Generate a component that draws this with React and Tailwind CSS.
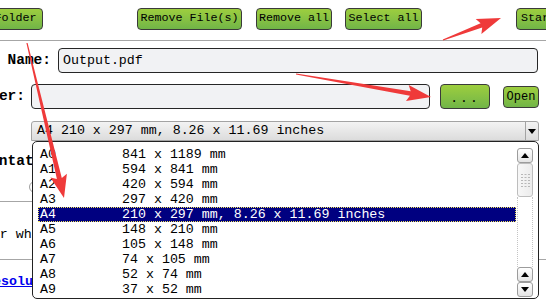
import React from "react";

const sizes = [
  ["A0", "841 x 1189 mm"],
  ["A1", "594 x 841 mm"],
  ["A2", "420 x 594 mm"],
  ["A3", "297 x 420 mm"],
  ["A4", "210 x 297 mm, 8.26 x 11.69 inches"],
  ["A5", "148 x 210 mm"],
  ["A6", "105 x 148 mm"],
  ["A7", "74 x 105 mm"],
  ["A8", "52 x 74 mm"],
  ["A9", "37 x 52 mm"],
];

// tapered arrow polygon from tail to tip
function arrowPoints(x1, y1, x2, y2, headLen, headW, shaftW) {
  const dx = x2 - x1;
  const dy = y2 - y1;
  const len = Math.hypot(dx, dy);
  const ux = dx / len;
  const uy = dy / len;
  const px = -uy;
  const py = ux;
  const bx = x2 - ux * headLen;
  const by = y2 - uy * headLen;
  const barbX = x2 - ux * (headLen + 3);
  const barbY = y2 - uy * (headLen + 3);
  const pts = [
    [x1 + px * 0.6, y1 + py * 0.6],
    [bx + px * (shaftW / 2), by + py * (shaftW / 2)],
    [barbX + px * (headW / 2), barbY + py * (headW / 2)],
    [x2, y2],
    [barbX - px * (headW / 2), barbY - py * (headW / 2)],
    [bx - px * (shaftW / 2), by - py * (shaftW / 2)],
    [x1 - px * 0.6, y1 - py * 0.6],
  ];
  return pts.map((p) => p[0].toFixed(1) + "," + p[1].toFixed(1)).join(" ");
}

const GreenButton = ({ children, className }) => (
  <button
    className={
      "flex shrink-0 items-center justify-center whitespace-nowrap rounded-[4px] border border-[#3a3a3a] bg-linear-to-b from-[#9dce3e] to-[#71b547] text-[11.7px] leading-none text-black " +
      className
    }
  >
    {children}
  </button>
);

const Tri = ({ up }) => (
  <svg width="8" height="5" viewBox="0 0 8 5">
    {up ? <polygon points="0,5 8,5 4,0" fill="#000" /> : <polygon points="0,0 8,0 4,5" fill="#000" />}
  </svg>
);

const ScrollBtn = ({ up }) => (
  <div className="flex h-[15px] w-[16px] items-center justify-center rounded-[3px] border border-[#9c9c9c] bg-linear-to-b from-white to-[#e4e4e4]">
    <Tri up={up} />
  </div>
);

const App = () => {
  return (
    <div className="relative h-[300px] w-[546px] overflow-hidden bg-white font-['Liberation_Mono',monospace] text-black">
      {/* toolbar */}
      <div className="flex h-[40px] items-start pt-[8px]">
        <GreenButton className="ml-[-40px] h-[22px] w-[83px]">Add Folder</GreenButton>
        <GreenButton className="ml-[94px] h-[22px] w-[105px]">Remove File(s)</GreenButton>
        <GreenButton className="ml-[14px] h-[22px] w-[76px]">Remove all</GreenButton>
        <GreenButton className="ml-[13px] h-[22px] w-[77px]">Select all</GreenButton>
        <GreenButton className="ml-[94px] h-[22px] w-[120px] !justify-start pl-[4px]">Start Convert</GreenButton>
      </div>
      <div className="h-px bg-[#a6a6a6]" />

      {/* file name */}
      <div className="mt-[7px] flex items-center">
        <div className="flex w-[51px] shrink-0 justify-end whitespace-nowrap text-[14.5px] font-bold">File Name:</div>
        <div className="ml-[7px] flex h-[25px] w-[480px] items-center rounded-[4px] border border-[#262626] bg-[#f1f2f4] pl-[4px] text-[13.3px]">
          Output.pdf
        </div>
      </div>

      {/* output folder */}
      <div className="mt-[11px] flex items-center">
        <div className="flex w-[25px] shrink-0 justify-end whitespace-nowrap text-[14.5px] font-bold">Output Folder:</div>
        <div className="ml-[6px] h-[25px] w-[399px] rounded-[4px] border border-[#262626] bg-[#f1f2f4]" />
        <GreenButton className="ml-[10px] h-[25px] w-[50px] pt-[4px] text-[13px] tracking-[2px]">...</GreenButton>
        <GreenButton className="ml-[13px] h-[22px] w-[36px] text-[12px]">Open</GreenButton>
      </div>

      {/* page size select */}
      <div className="ml-[31px] mt-[12px] flex h-[20px] w-[508px] items-center rounded-t-[3px] border border-[#a3a3a3] bg-linear-to-b from-[#f3f3f3] to-[#dcdcdc]">
        <div className="flex-1 whitespace-nowrap pl-[5px] text-[13.3px] leading-none">A4 210 x 297 mm, 8.26 x 11.69 inches</div>
        <div className="flex h-full w-[13px] items-center justify-center border-l border-[#a3a3a3]">
          <Tri />
        </div>
      </div>

      {/* content behind the open list */}
      <div className="mt-[11px] flex h-[20px] items-center">
        <div className="ml-[-36px] whitespace-nowrap text-[14.5px] font-bold">Orientation:</div>
      </div>
      <div className="flex h-[29px] items-center">
        <div className="ml-[29px] h-[12px] w-[12px] rounded-full border border-[#a0a0a0]" />
      </div>
      <div className="h-px w-[420px] bg-[#a6a6a6]" />
      <div className="ml-[-96px] mt-[24px] whitespace-nowrap text-[13.3px] leading-[18px]">Output folder where files are saved</div>
      <div className="mt-[15px] h-px bg-[#a6a6a6]" />
      <div className="ml-[-15px] mt-[13px] whitespace-nowrap text-[13.3px] font-bold leading-[18px] text-[#0000ee] underline">
        Resolution
      </div>

      {/* open dropdown list */}
      <div className="absolute left-[32px] top-[141px] flex h-[158px] w-[507px] rounded-[5px] border border-[#222] bg-white">
        <div className="flex-1 pl-[5px] pt-[5px]">
          {sizes.map(([name, dims]) => {
            const selected = name === "A4";
            return (
              <div
                key={name}
                className={
                  selected
                    ? "flex h-[15px] items-center whitespace-nowrap bg-[#000080] pl-[2px] text-[13.3px] leading-none text-white outline-1 outline-dotted outline-offset-[-1px] outline-[#f2e35a]"
                    : "flex h-[15px] items-center whitespace-nowrap pl-[2px] text-[13.3px] leading-none"
                }
              >
                <span className="w-[82px] shrink-0">{name}</span>
                <span>{dims}</span>
              </div>
            );
          })}
        </div>
        <div className="ml-[1px] mr-[5px] flex w-[16px] flex-col pt-[6px] pb-[1px]">
          <ScrollBtn up />
          <div className="flex h-[34px] items-center justify-center rounded-[3px] border border-[#bdbdbd] bg-linear-to-r from-[#f7f7f7] to-[#ececec]">
            <svg width="9" height="13" viewBox="0 0 9 13">
              {[0, 3, 6, 9, 12].map((y) =>
                [0, 3.5, 7].map((x) => <rect key={x + "-" + y} x={x} y={y} width="2" height="1" fill="#b8b8b8" />)
              )}
            </svg>
          </div>
          <div className="flex-1 border-x border-dotted border-[#c4c4c4]" />
          <ScrollBtn up />
          <ScrollBtn />
        </div>
      </div>

      {/* red arrows */}
      <svg className="pointer-events-none absolute left-0 top-0" width="546" height="300" viewBox="0 0 546 300">
        <polygon points={arrowPoints(27, 43, 64, 198, 20, 17, 5)} fill="#ef3a3a" />
        <polygon points={arrowPoints(296, 74, 431, 97, 21, 16, 4.5)} fill="#ef3a3a" />
        <polygon points={arrowPoints(443, 40, 501, 18, 21, 16, 4.5)} fill="#ef3a3a" />
      </svg>
    </div>
  );
};

export default App;
